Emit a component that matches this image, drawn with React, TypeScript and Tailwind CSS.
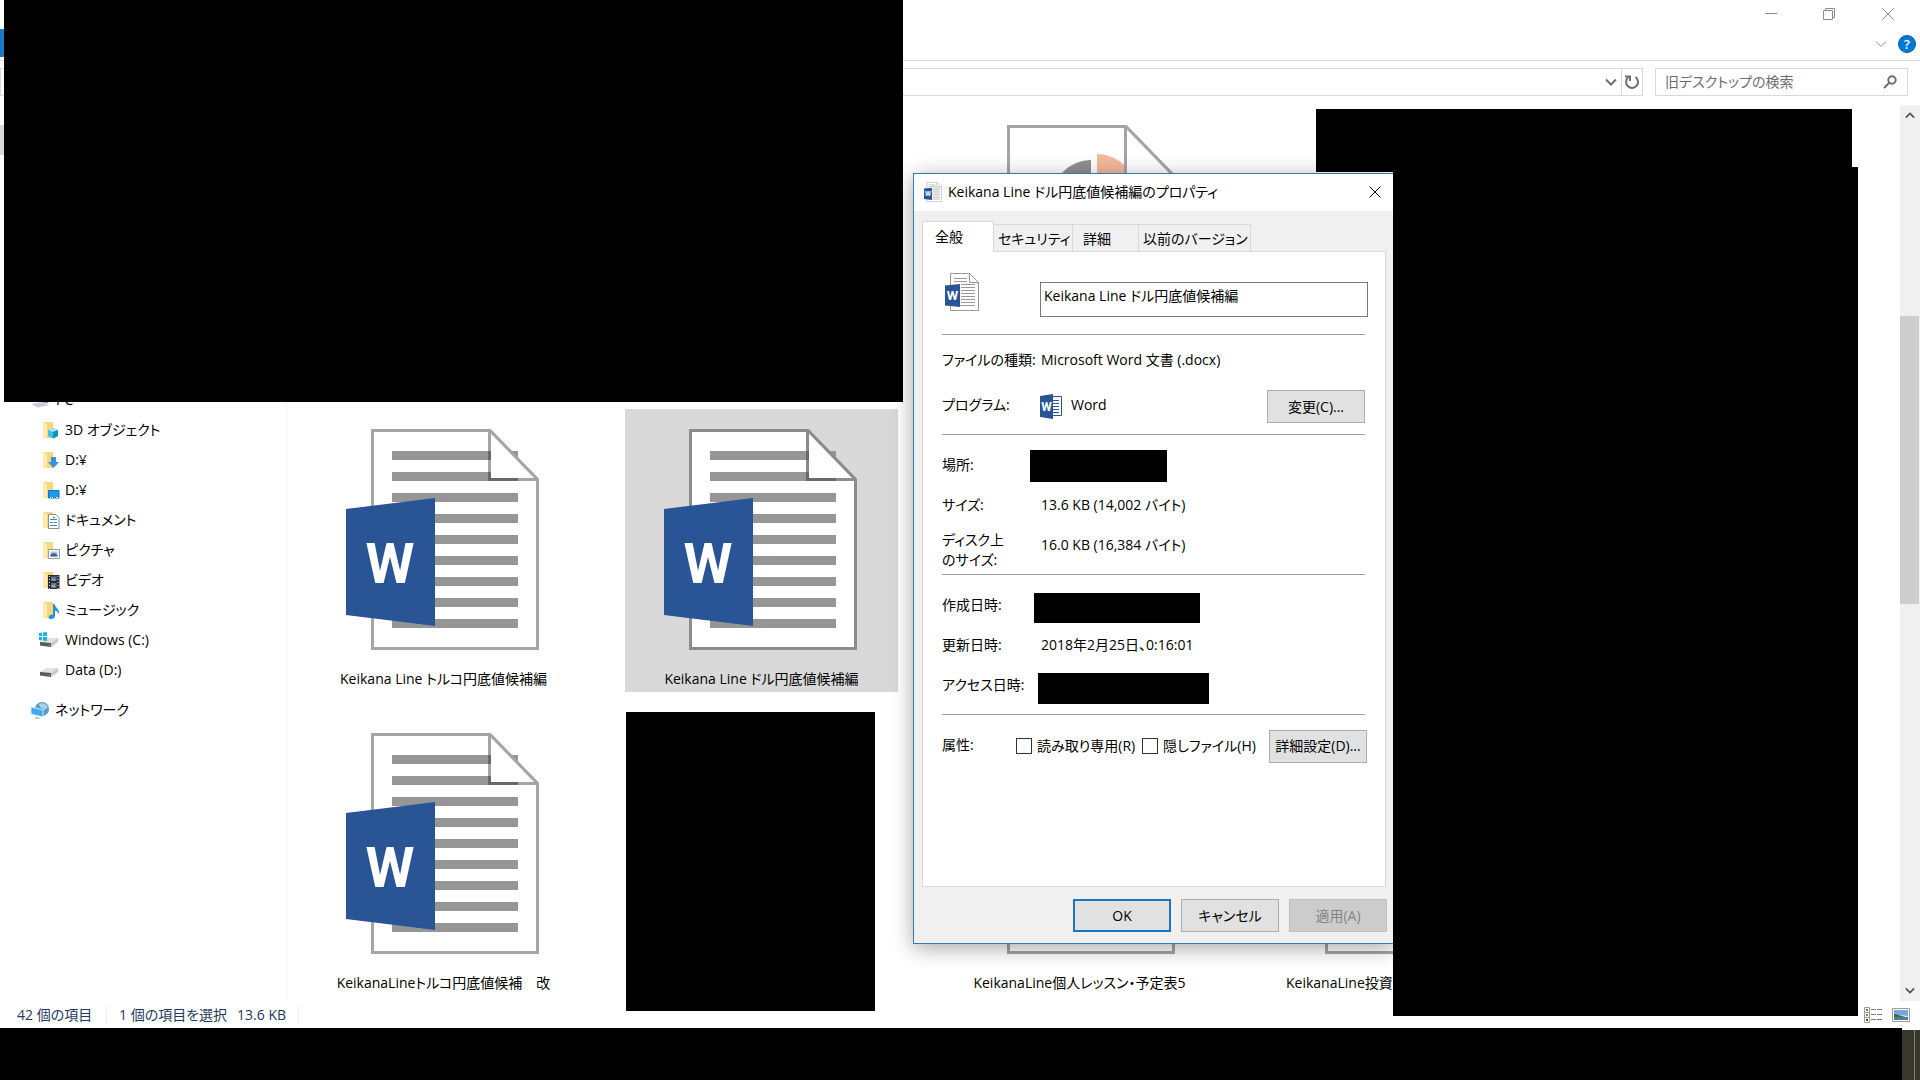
import { useState, type ReactNode } from 'react';

type FileKind = 'word' | 'slides' | 'page' | 'hidden';

interface FileItem {
  id: number;
  kind: FileKind;
  name?: string;
  selected?: boolean;
  cut?: boolean;
}

const FILES: FileItem[] = [
  { id: 1, kind: 'hidden' },
  { id: 2, kind: 'hidden' },
  { id: 3, kind: 'slides' },
  { id: 4, kind: 'hidden' },
  { id: 5, kind: 'hidden' },
  { id: 6, kind: 'word', name: 'Keikana Line トルコ円底値候補編' },
  { id: 7, kind: 'word', name: 'Keikana Line ドル円底値候補編', selected: true },
  { id: 8, kind: 'hidden' },
  { id: 9, kind: 'hidden' },
  { id: 10, kind: 'hidden' },
  { id: 11, kind: 'word', name: 'KeikanaLineトルコ円底値候補　改' },
  { id: 12, kind: 'hidden' },
  { id: 13, kind: 'page', name: 'KeikanaLine個人レッスン・予定表5' },
  { id: 14, kind: 'page', name: 'KeikanaLine投資', cut: true },
];

const TABS = [
  { label: 'セキュリティ', width: 'w-[79px]', pad: 'pl-1' },
  { label: '詳細', width: 'w-[66px]', pad: 'pl-[10px]' },
  { label: '以前のバージョン', width: 'w-[112px]', pad: 'pl-1' },
];

const LINE_YS = [40, 61, 82, 103, 124, 145, 166, 187, 208];

// Large thumbnails, drawn on a 256px canvas
function PageThumb({ kind, selected }: { kind: FileKind; selected?: boolean }) {
  const edge = selected ? '#8c8c8c' : '#a5a5a5';
  return (
    <svg viewBox="0 0 256 256" className="mr-px size-64" aria-hidden="true">
      <path d="M57.5 19.5H175L222.500 68.500V237.500H57.500Z" fill="#fff" stroke={edge} strokeWidth="3" />
      {kind === 'word' && LINE_YS.map((y) => (
        <rect key={y} x="77" y={y} width="126" height="9" fill="#969696" />
      ))}
      {kind === 'slides' && (
        <>
          <path d="M140 53A39 39 0 0 0 101 92H140Z" fill="#8f8f8f" />
          <path d="M146 47A39 39 0 0 1 185 86H146Z" fill="#f4b89b" />
        </>
      )}
      <path d="M174.500 20V68.500H222Z" fill="#fff" stroke="none" />
      <path d="M174.500 20V68.500H222" fill="none" stroke={edge} strokeWidth="3" />
      <path d="M175 19.500L222.500 68.500" stroke={edge} strokeWidth="3" />
      {kind === 'word' && (
        <>
          <path d="M173 40h3v9h-3zM173 61h3v6h27v3h-30z" fill="#696969" />
          <path d="M31 98L120 87V215L31 204Z" fill="#295496" />
          <text x="75" y="172" textAnchor="middle" fontSize="56" className="fill-white font-['Liberation_Sans_Narrow','Roboto','Liberation_Sans',sans-serif] font-bold">W</text>
        </>
      )}
    </svg>
  );
}

// Small version of the document icon
function DocIcon({ className }: { className: string }) {
  return (
    <svg viewBox="0 0 34 38" className={className} aria-hidden="true">
      <path d="M5.500.5H24.500L33.500 9.500V37.500H5.500Z" fill="#fff" stroke="#999" />
      <path d="M24.500.5V9.500H33.500" fill="none" stroke="#999" />
      <path d="M9 5.500H22M9 8.500H22M16 11.500H30M16 14.500H30M16 17.500H30M16 20.500H30M16 23.500H30M16 26.500H30M16 29.500H30M9 32.500H30" stroke="#999" />
      <path d="M0 12.500L15 11V34L0 32.500Z" fill="#295496" />
      <text x="7.500" y="27" textAnchor="middle" fontSize="13" className="fill-white font-['Liberation_Sans_Narrow','Roboto','Liberation_Sans',sans-serif] font-bold">W</text>
    </svg>
  );
}

function WordAppIcon() {
  return (
    <svg viewBox="0 0 22 25" className="h-[25px] w-[22px]" aria-hidden="true">
      <path d="M10 2.500H21.500V21.500H10Z" fill="#fff" stroke="#295496" />
      <path d="M13 6.500H19M13 9.500H19M13 12.500H19M13 15.500H19M13 18.500H19" stroke="#295496" />
      <path d="M0 2L13 0V25L0 23Z" fill="#295496" />
      <text x="6.500" y="17" textAnchor="middle" fontSize="12" className="fill-white font-['Liberation_Sans_Narrow','Roboto','Liberation_Sans',sans-serif] font-bold">W</text>
    </svg>
  );
}

function FolderIcon({ children }: { children: ReactNode }) {
  return (
    <svg viewBox="0 0 18 18" className="ml-1 h-[18px] w-[18px]" aria-hidden="true">
      <path d="M1 1H11V17H1Z" fill="#f5d77f" />
      <path d="M1 1L5 3V18L1 16Z" fill="#fdebae" />
      {children}
    </svg>
  );
}

function DriveIcon({ windows }: { windows?: boolean }) {
  return (
    <svg viewBox="0 0 22 18" className="h-[18px] w-[22px]" aria-hidden="true">
      <path d="M2 11L9 7H20V11L13 16L2 14Z" fill="#c9c9c9" />
      <path d="M2 11L9 7H20L13 12Z" fill="#e3e3e3" />
      <path d="M2 11L13 12V16L2 14.500Z" fill="#5b5b5b" />
      <path d="M11 14h1v1h-1z" fill="#7ddc6a" />
      {windows && <path d="M1 2L4 1.500V5H1ZM5 1.500L9 1V5H5ZM1 6H4V9.500L1 9ZM5 6H9V10L5 9.500Z" fill="#12b5e5" />}
    </svg>
  );
}

const PLACES: { name: string; icon: ReactNode }[] = [
  {
    name: '3D オブジェクト',
    icon: (
      <FolderIcon>
        <path d="M6 9L11 7L16 9V15L11 17.500L6 15Z" fill="#3fc0dc" />
        <path d="M6 9L11 7L16 9L11 11Z" fill="#a8e8f2" />
        <path d="M11 11L16 9V15L11 17.500Z" fill="#1493b8" />
      </FolderIcon>
    ),
  },
  { name: 'D:¥', icon: <FolderIcon><path d="M9 6H14V11H17L11.500 17L6 11H9Z" fill="#3c8fe0" /></FolderIcon> },
  {
    name: 'D:¥',
    icon: (
      <FolderIcon>
        <path d="M6.500 9.500H17V17H6.500Z" fill="#1e9bf0" stroke="#1273b8" />
        <path d="M8 16.500H9M10 16.500H11M14 16.500H16" stroke="#fff" />
      </FolderIcon>
    ),
  },
  {
    name: 'ドキュメント',
    icon: (
      <FolderIcon>
        <path d="M6.500 3.500H14L17 6.500V17.500H6.500Z" fill="#fff" stroke="#8f8f8f" />
        <path d="M8 8.500H15M8 11.500H11M12 11.500H15M8 14.500H15M11 6.500H13" stroke="#3a8bc8" />
      </FolderIcon>
    ),
  },
  {
    name: 'ピクチャ',
    icon: (
      <FolderIcon>
        <path d="M6.500 8.500H17.500V17.500H6.500Z" fill="#fff" stroke="#9a9a9a" />
        <path d="M8.500 10.500H15.500V15.500H8.500Z" fill="#9cc8ea" />
        <path d="M8.500 13.500L12 12L15.500 14V15.500H8.500Z" fill="#35618c" />
      </FolderIcon>
    ),
  },
  {
    name: 'ビデオ',
    icon: (
      <FolderIcon>
        <path d="M6 4H17.500V18H6Z" fill="#2b2b2b" />
        <path d="M9 5.500H14.500V10H9ZM9 12H14.500V17H9Z" fill="#5277b8" />
        <path d="M10 8H13V9.500H10ZM10 14H13V16H10Z" fill="#c9a04a" />
        <path d="M7.500 5V18M16 5V18" stroke="#ddd" strokeDasharray="1 2" />
      </FolderIcon>
    ),
  },
  {
    name: 'ミュージック',
    icon: (
      <FolderIcon>
        <path d="M11 3H12.500C13 6.500 18 8 17 13.500C16 10.500 14 9.500 13 9.500V15C13 17 11 18 9 18C6.500 18 6 16 7.500 14.500C8.500 13.500 10 13.500 11 14Z" fill="#1e90e8" />
      </FolderIcon>
    ),
  },
  { name: 'Windows (C:)', icon: <DriveIcon windows /> },
  { name: 'Data (D:)', icon: <DriveIcon /> },
];

function Chevron({ up, className }: { up?: boolean; className: string }) {
  return (
    <svg viewBox="0 0 12 8" className={className} fill="none" stroke="currentColor" aria-hidden="true">
      <path d={up ? 'M1 6.500L6 1.500L11 6.500' : 'M1 1.500L6 6.500L11 1.500'} />
    </svg>
  );
}

function Close({ className }: { className: string }) {
  return (
    <svg viewBox="0 0 12 12" className={className} fill="none" stroke="currentColor" aria-hidden="true">
      <path d="M.5.5L11.500 11.500M11.500.5L.5 11.500" />
    </svg>
  );
}

function DialogButton({ children, primary, disabled }: { children: ReactNode; primary?: boolean; disabled?: boolean }) {
  const look = primary
    ? 'border-2 border-[#1a76c0] bg-[#e1e1e1]'
    : disabled
      ? 'border border-[#bfbfbf] bg-[#cccccc] text-[#838383]'
      : 'border border-[#adadad] bg-[#e1e1e1]';
  return (
    <button type="button" disabled={disabled} className={`h-[33px] w-[98px] shrink-0 whitespace-nowrap ${look}`}>
      {children}
    </button>
  );
}

function Sidebar() {
  return (
    <nav aria-label="ナビゲーション" className="w-[287px] shrink-0 border-r border-[#f2f2f2]">
      <div className="mt-5 h-[30px] bg-[#d9d9d9]" />
      <div className="mt-[230px] flex h-[30px] items-center gap-[6px] pl-[30px]">
        <svg viewBox="0 0 20 16" className="h-4 w-5" aria-hidden="true">
          <path d="M7 1H18V11L7 9Z" fill="#3d9ad6" stroke="#8c9aa5" />
          <path d="M1 12L11 10L19 13L8 15.500Z" fill="#c5cdd3" />
        </svg>
        PC
      </div>
      <ul>
        {PLACES.map(({ name, icon }, i) => (
          <li key={i} className="flex h-[30px] items-center pl-[38px]">
            <span className="w-[27px]">{icon}</span>
            {name}
          </li>
        ))}
      </ul>
      <div className="mt-[10px] flex h-[30px] items-center gap-[5px] pl-[30px]">
        <svg viewBox="0 0 20 18" className="h-[18px] w-5" aria-hidden="true">
          <circle cx="12" cy="8" r="7" fill="#5a9cc4" />
          <path d="M9 3C12 1 16 3 18 6L14 9L10 6Z" fill="#a9d3e6" />
          <path d="M1 6L13 9V16L1 13Z" fill="#3fa9f0" stroke="#d5e7f3" />
          <path d="M6 16L11 17.500H5Z" fill="#8a98a3" />
        </svg>
        ネットワーク
      </div>
    </nav>
  );
}

function FileGrid() {
  return (
    <ul className="grid min-w-0 flex-1 grid-cols-[repeat(auto-fill,273px)] content-start gap-x-[45px] gap-y-[21px] overflow-hidden pl-5">
      {FILES.map(({ id, kind, name, selected, cut }) => (
        <li
          key={id}
          className={`flex h-[283px] flex-col items-center pt-[2px] ${selected ? 'bg-[#d9d9d9]' : ''}`}
        >
          {kind !== 'hidden' && <PageThumb kind={kind} selected={selected} />}
          <span className={`leading-6 whitespace-pre ${cut ? 'self-start pl-[25px]' : ''}`}>{name}</span>
        </li>
      ))}
    </ul>
  );
}

function Scrollbar() {
  return (
    <div className="flex w-5 shrink-0 flex-col bg-[#f0f0f0] text-[#505050]">
      <button type="button" aria-label="上へ" className="flex h-5 items-center justify-center">
        <Chevron up className="h-[7px] w-[10px] stroke-2" />
      </button>
      <div className="flex-[191]" />
      <div className="mr-px flex-[288] bg-[#cdcdcd]" />
      <div className="flex-[377]" />
      <button type="button" aria-label="下へ" className="flex h-5 items-center justify-center pb-[2px]">
        <Chevron className="h-[7px] w-[10px] stroke-2" />
      </button>
    </div>
  );
}

function Row({ label, labelWidth = 'w-[99px]', children }: { label: string; labelWidth?: string; children: ReactNode }) {
  return (
    <div className="flex h-10 items-center">
      <dt className={`shrink-0 ${labelWidth}`}>{label}</dt>
      {children}
    </div>
  );
}

function PropertiesDialog() {
  const [fileName, setFileName] = useState('Keikana Line ドル円底値候補編');

  return (
    <section
      role="dialog"
      aria-labelledby="dialog-title"
      className="absolute top-[173px] left-[913px] w-[482px] border border-[#2f7db8] bg-[#f0f0f0] shadow-[0_4px_20px_rgba(0,0,0,0.35)]"
    >
      <header className="flex h-[37px] items-center bg-white pb-[2px] pl-[10px]">
        <DocIcon className="h-5 w-[18px]" />
        <h1 id="dialog-title" className="ml-[6px] flex-1">Keikana Line ドル円底値候補編のプロパティ</h1>
        <button type="button" aria-label="閉じる" className="mr-[13px]">
          <Close className="size-3" />
        </button>
      </header>

      <div className="px-2 pt-[10px]">
        <div role="tablist" className="flex h-[30px] items-end">
          <button type="button" role="tab" aria-selected="true" className="z-10 -mb-px h-[31px] w-[72px] border border-b-0 border-[#d9d9d9] bg-white pl-3 text-left">
            全般
          </button>
          {TABS.map(({ label, width, pad }) => (
            <button
              key={label}
              type="button"
              role="tab"
              aria-selected="false"
              className={`h-[27px] border-t border-r border-[#d9d9d9] pt-[2px] text-left whitespace-nowrap ${width} ${pad}`}
            >
              {label}
            </button>
          ))}
        </div>

        <div role="tabpanel" className="min-h-[636px] border border-[#d9d9d9] bg-white pr-5 pl-[19px]">
          <div className="flex h-[83px] items-start border-b border-[#a0a0a0] pt-[21px]">
            <DocIcon className="ml-[3px] h-[38px] w-[34px]" />
            <input
              aria-label="ファイル名"
              value={fileName}
              onChange={(e) => setFileName(e.target.value)}
              className="mt-[9px] -mr-[3px] ml-[61px] h-[35px] min-w-0 flex-1 border border-[#7a7a7a] px-[3px] pb-[10px]"
            />
          </div>

          <dl className="border-b border-[#a0a0a0] pt-[5px] pb-[6px]">
            <Row label="ファイルの種類:"><dd>Microsoft Word 文書 (.docx)</dd></Row>
            <div className="mt-[5px] flex h-[43px] items-center">
              <dt className="w-[98px] pb-1">プログラム:</dt>
              <dd className="flex flex-1 items-center gap-[9px]"><WordAppIcon /><span className="pb-1">Word</span></dd>
              <DialogButton>変更(C)...</DialogButton>
            </div>
          </dl>

          <dl className="border-b border-[#a0a0a0] pt-[10px]">
            <Row label="場所:" labelWidth="w-[88px]"><dd className="mt-[2px] h-8 w-[137px] bg-black" /></Row>
            <Row label="サイズ:"><dd>13.6 KB (14,002 バイト)</dd></Row>
            <div className="flex h-[49px] items-start pt-[5px] leading-5">
              <dt className="w-[99px]">ディスク上<br />のサイズ:</dt>
              <dd className="pt-[5px]">16.0 KB (16,384 バイト)</dd>
            </div>
          </dl>

          <dl className="border-b border-[#a0a0a0] pt-[10px] pb-[9px]">
            <Row label="作成日時:" labelWidth="w-[92px]"><dd className="mt-2 h-[30px] w-[166px] self-start bg-black" /></Row>
            <Row label="更新日時:"><dd>2018年2月25日、0:16:01</dd></Row>
            <Row label="アクセス日時:" labelWidth="w-[96px]"><dd className="mt-2 h-[31px] w-[171px] self-start bg-black" /></Row>
          </dl>

          <div className="-mr-[2px] flex h-[62px] items-center whitespace-nowrap">
            <span className="w-[74px] pb-[2px]">属性:</span>
            <label className="flex w-[126px] items-center gap-[5px]">
              <input type="checkbox" className="size-4 shrink-0 appearance-none border border-[#333] bg-white" />
              読み取り専用(R)
            </label>
            <label className="flex flex-1 items-center gap-[5px]">
              <input type="checkbox" className="size-4 shrink-0 appearance-none border border-[#333] bg-white" />
              隠しファイル(H)
            </label>
            <DialogButton>詳細設定(D)...</DialogButton>
          </div>
        </div>
      </div>

      <footer className="flex justify-end gap-[10px] pt-3 pr-[7px] pb-[11px]">
        <DialogButton primary>OK</DialogButton>
        <DialogButton>キャンセル</DialogButton>
        <DialogButton disabled>適用(A)</DialogButton>
      </footer>
    </section>
  );
}

export default function App() {
  return (
    <div className="relative flex h-screen flex-col overflow-hidden bg-white font-['Open_Sans','Noto_Sans_CJK_JP',sans-serif] text-[14px] leading-5 text-black [font-feature-settings:'palt']">
      {/* Title bar */}
      <header className="flex h-[29px] shrink-0 justify-end pr-[2px] pb-px text-[#8a8a8a]">
        <button type="button" aria-label="最小化" className="flex w-[58px] items-center justify-center">
          <svg viewBox="0 0 12 12" className="size-3" stroke="currentColor"><path d="M0 5.500H12" /></svg>
        </button>
        <button type="button" aria-label="元に戻す" className="flex w-[58px] items-center justify-center">
          <svg viewBox="0 0 12 12" className="size-3" fill="none" stroke="currentColor">
            <path d="M.5 2.500H9.500V11.500H.5ZM2.500 2.500V.5H11.500V9.500H9.500" />
          </svg>
        </button>
        <button type="button" aria-label="閉じる" className="flex w-[60px] items-center justify-center">
          <Close className="size-3" />
        </button>
      </header>

      {/* Ribbon tabs */}
      <div className="flex h-8 shrink-0 items-start justify-between border-b border-[#dadbdc] pr-1">
        <div className="h-7 w-[70px] bg-[#1979ca]" />
        <div className="flex h-[30px] items-center gap-[11px] text-[#8a8a8a]">
          <button type="button" aria-label="リボンの展開"><Chevron className="h-2 w-3" /></button>
          <button type="button" aria-label="ヘルプ" className="flex size-[18px] items-center justify-center rounded-full border border-[#0a5ca8] bg-[#0078d7] text-[13px] font-semibold text-white">?</button>
        </div>
      </div>

      {/* Address bar and search */}
      <div className="flex h-11 shrink-0 items-start gap-3 pt-[7px] pr-3">
        <div className="flex h-7 flex-1 justify-end border border-[#d9d9d9] text-[#6d6d6d]">
          <button type="button" aria-label="履歴" className="flex w-5 items-center justify-center">
            <Chevron className="h-2 w-3 stroke-2" />
          </button>
          <button type="button" aria-label="最新の情報に更新" className="flex w-[21px] items-center justify-center border-l border-[#d9d9d9]">
            <svg viewBox="0 0 16 16" className="size-4" fill="none" stroke="currentColor" strokeWidth="2">
              <path d="M11.500 3A6 6 0 1 1 4 3.500" />
              <path d="M1 2.500H6V7" />
            </svg>
          </button>
        </div>
        <div className="flex h-7 w-[253px] items-center border border-[#d9d9d9] pr-[10px] pl-[9px]">
          <input aria-label="検索" placeholder="旧デスクトップの検索" className="min-w-0 flex-1 outline-none placeholder:text-[#6d6d6d]" />
          <svg viewBox="0 0 14 14" className="size-[14px]" fill="none" stroke="#6d6d6d" strokeWidth="2">
            <circle cx="9" cy="5" r="3.700" />
            <path d="M6.500 7.500L1 13" />
          </svg>
        </div>
      </div>

      <main className="flex min-h-0 flex-1">
        <Sidebar />
        <FileGrid />
        <Scrollbar />
      </main>

      {/* Status bar */}
      <div className="flex h-[27px] shrink-0 items-center pr-[10px] pl-[17px] text-[#1e395b]">
        <span className="w-[90px] border-r border-[#f0f0f0]">42 個の項目</span>
        <span className="ml-3 flex w-[180px] gap-[10px] border-r border-[#f0f0f0]">
          <span>1 個の項目を選択</span>
          <span>13.6 KB</span>
        </span>
        <div className="ml-auto flex items-center gap-[10px]">
          <button type="button" aria-label="詳細">
            <svg viewBox="0 0 18 16" className="h-4 w-[18px]" fill="none">
              <path d="M.5.5H5.500V15.500H.5ZM.5 5.500H5.500M.5 10.500H5.500" stroke="#a39a92" />
              <path d="M2 2h2v2h-2z" fill="#4a78b0" />
              <path d="M2 7h2v2h-2z" fill="#7d8a3c" />
              <path d="M2 12h2v2h-2z" fill="#94382a" />
              <path d="M7 2.500H12M13 2.500H18M7 7.500H12M13 7.500H18M7 12.500H12M13 12.500H18" stroke="#7a7a7a" />
            </svg>
          </button>
          <button type="button" aria-label="大アイコン">
            <svg viewBox="0 0 18 14" className="h-[14px] w-[18px]">
              <path d="M.5.5H17.500V13.500H.5Z" fill="#fff" stroke="#a39a92" />
              <path d="M2 2H16V12H2Z" fill="#6fa9e6" />
              <path d="M2 6L16 8V9H2Z" fill="#d3e6f2" />
              <path d="M2 6C6 6 9 8 13 9H2Z" fill="#3c6b4e" />
              <path d="M2 9H16V12H2Z" fill="#4d7f96" />
            </svg>
          </button>
        </div>
      </div>

      {/* Taskbar */}
      <div className="flex h-[52px] shrink-0">
        <div className="flex-1 bg-black" />
        <div className="mt-[2px] w-3 bg-[#38372d]" />
        <div className="mt-[2px] w-[6px] border-l border-[#85847c] bg-[#38372d]" />
      </div>

      <PropertiesDialog />

      {/* Blacked-out areas */}
      <div className="absolute top-0 left-1 h-[402px] w-[899px] bg-black" />
      <div className="absolute top-[109px] left-[1316px] h-[63px] w-[536px] bg-black" />
      <div className="absolute top-[167px] left-[1393px] h-[849px] w-[465px] bg-black" />
      <div className="absolute top-[712px] left-[626px] h-[299px] w-[249px] bg-black" />
    </div>
  );
}
